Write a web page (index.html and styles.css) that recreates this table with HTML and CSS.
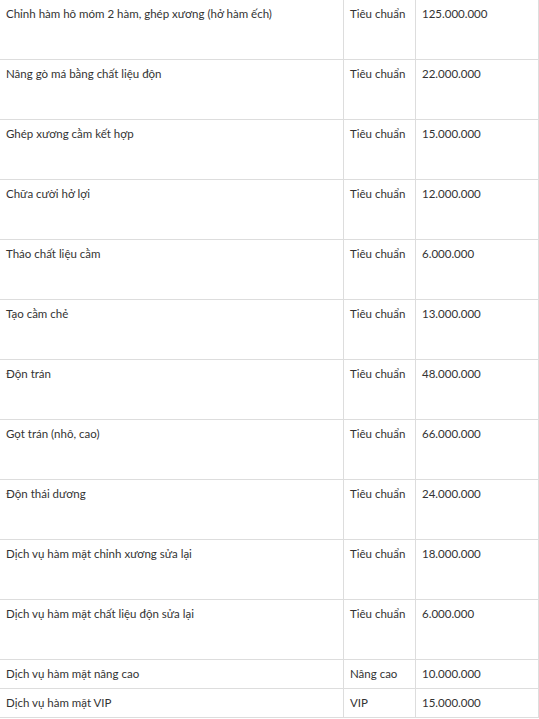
FILE: index.html
```html
<!DOCTYPE html>
<html lang="vi">
<head>
<meta charset="utf-8">
<link rel="stylesheet" href="styles.css">
</head>
<body>
<table class="price-table">
  <colgroup>
    <col class="col-name">
    <col class="col-tier">
    <col class="col-price">
  </colgroup>
  <tbody>
    <tr class="tall"><td>Chỉnh hàm hô móm 2 hàm, ghép xương (hở hàm ếch)</td><td>Tiêu chuẩn</td><td>125.000.000</td></tr>
    <tr class="tall"><td>Nâng gò má bằng chất liệu độn</td><td>Tiêu chuẩn</td><td>22.000.000</td></tr>
    <tr class="tall"><td>Ghép xương cằm kết hợp</td><td>Tiêu chuẩn</td><td>15.000.000</td></tr>
    <tr class="tall"><td>Chữa cười hở lợi</td><td>Tiêu chuẩn</td><td>12.000.000</td></tr>
    <tr class="tall"><td>Tháo chất liệu cằm</td><td>Tiêu chuẩn</td><td>6.000.000</td></tr>
    <tr class="tall"><td>Tạo cằm chẻ</td><td>Tiêu chuẩn</td><td>13.000.000</td></tr>
    <tr class="tall"><td>Độn trán</td><td>Tiêu chuẩn</td><td>48.000.000</td></tr>
    <tr class="tall"><td>Gọt trán (nhô, cao)</td><td>Tiêu chuẩn</td><td>66.000.000</td></tr>
    <tr class="tall"><td>Độn thái dương</td><td>Tiêu chuẩn</td><td>24.000.000</td></tr>
    <tr class="tall"><td>Dịch vụ hàm mặt chỉnh xương sửa lại</td><td>Tiêu chuẩn</td><td>18.000.000</td></tr>
    <tr class="tall"><td>Dịch vụ hàm mặt chất liệu độn sửa lại</td><td>Tiêu chuẩn</td><td>6.000.000</td></tr>
    <tr><td>Dịch vụ hàm mặt nâng cao</td><td>Nâng cao</td><td>10.000.000</td></tr>
    <tr><td>Dịch vụ hàm mặt VIP</td><td>VIP</td><td>15.000.000</td></tr>
  </tbody>
</table>
</body>
</html>
```
FILE: styles.css
```css
html, body {
  margin: 0;
  padding: 0;
  background: #fff;
}
body {
  font-family: "Lato", "Open Sans", sans-serif;
  font-size: 11.5px;
  color: #333;
}
.price-table {
  border-collapse: collapse;
  width: 539px;
  margin: -1px 0 0 -1px;
  table-layout: fixed;
}
.col-name { width: 344px; }
.col-tier { width: 72px; }
.col-price { width: 123px; }
.price-table td {
  border: 1px solid #ddd;
  padding: 6px 6px 6px 6px;
  vertical-align: top;
  line-height: 16px;
  height: 16px;
  white-space: nowrap;
  overflow: hidden;
}
.price-table tr.tall td {
  height: 47px;
}
```
